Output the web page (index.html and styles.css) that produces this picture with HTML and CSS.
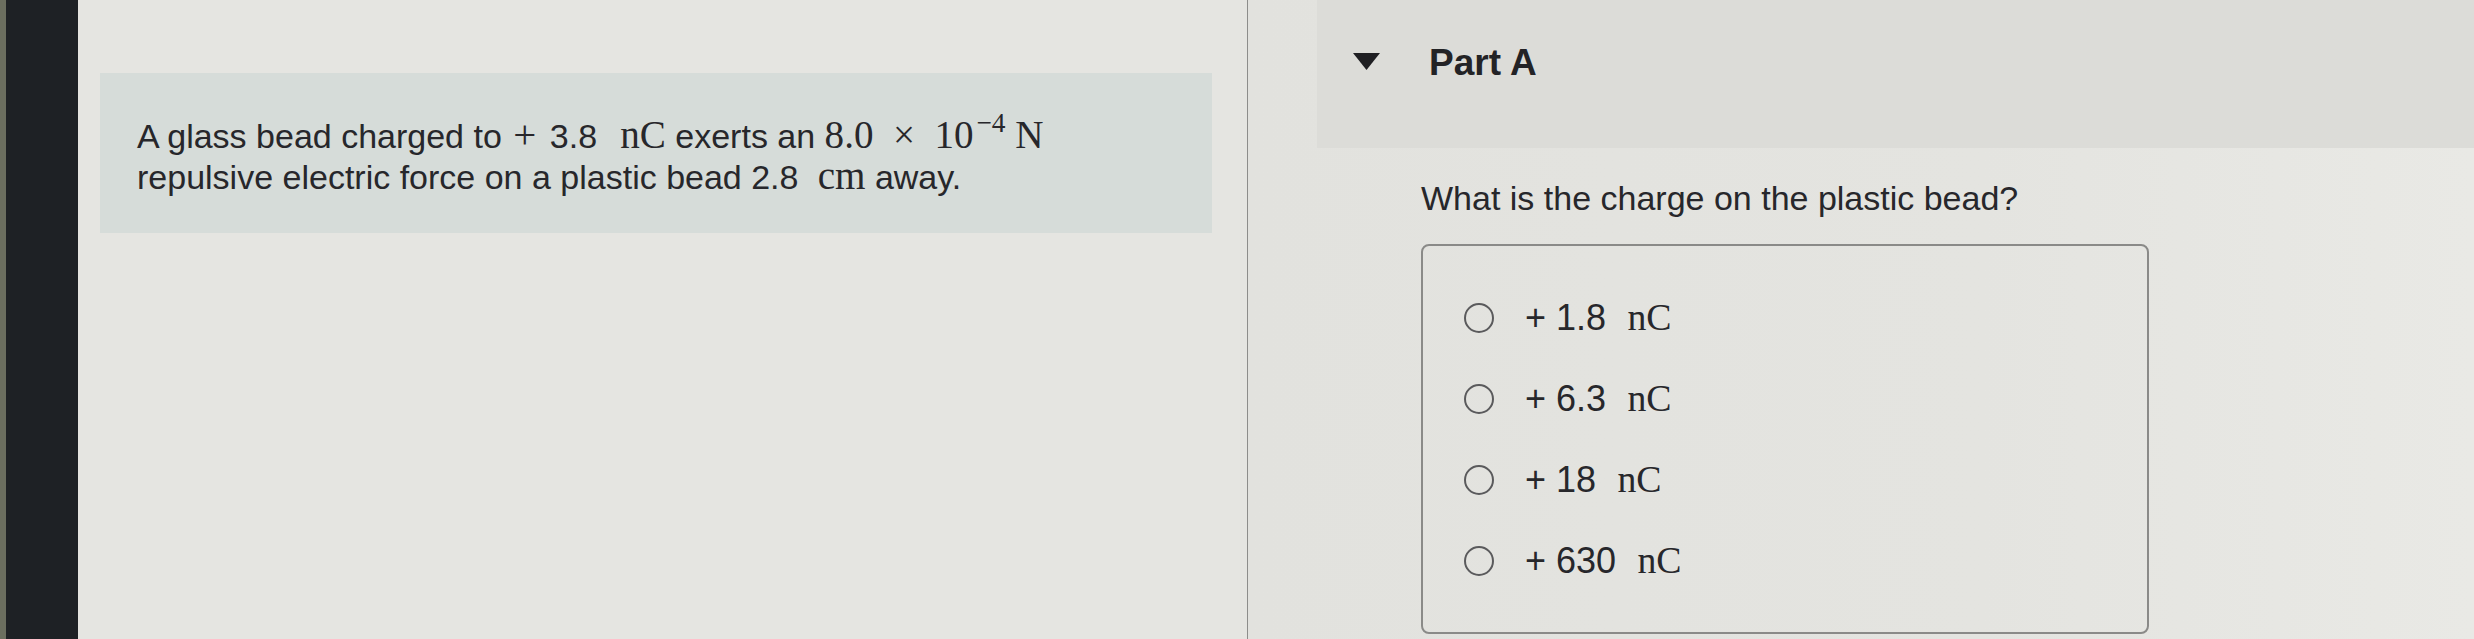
FILE: index.html
```html
<!DOCTYPE html>
<html lang="en">
<head>
<meta charset="utf-8">
<title>Part A</title>
<link rel="stylesheet" href="styles.css">
</head>
<body>
<div class="screen">
  <div class="bezel"></div>
  <main class="left-pane">
    <div class="problem">
      <p class="problem-text">A glass bead charged to <span class="mo">+</span> 3.8 <span class="mi">nC</span> exerts an <span class="mi num">8.0 <span class="times">×</span> 10<sup class="sup">−4</sup> N</span><br>repulsive electric force on a plastic bead 2.8 <span class="mi unit">cm</span> away.</p>
    </div>
  </main>
  <div class="divider"></div>
  <section class="right-pane">
    <header class="part-header">
      <svg class="caret" width="27" height="17" viewBox="0 0 27 17"><polygon points="0,0 27,0 13.5,17" fill="#1f1f22"/></svg>
      <h2 class="part-title">Part A</h2>
    </header>
    <div class="part-body">
      <p class="question">What is the charge on the plastic bead?</p>
      <div class="choices">
        <label class="choice"><span class="radio"></span><span class="choice-text">+ 1.8 <span class="mi">nC</span></span></label>
        <label class="choice"><span class="radio"></span><span class="choice-text">+ 6.3 <span class="mi">nC</span></span></label>
        <label class="choice"><span class="radio"></span><span class="choice-text">+ 18 <span class="mi">nC</span></span></label>
        <label class="choice"><span class="radio"></span><span class="choice-text">+ 630 <span class="mi">nC</span></span></label>
      </div>
    </div>
  </section>
</div>
</body>
</html>
```
FILE: styles.css
```css
html, body {
  margin: 0;
  padding: 0;
}
body {
  width: 2474px;
  height: 639px;
  overflow: hidden;
  background: #e4e4e0;
  font-family: "Liberation Sans", Arial, Helvetica, sans-serif;
  color: #27272b;
}
.screen {
  display: flex;
  height: 639px;
}
.bezel {
  width: 72px;
  flex: none;
  background: #1e2125;
  border-left: 6px solid #6b6e5f;
}
.left-pane {
  width: 1169px;
  flex: none;
  padding: 73px 0 0 22px;
  box-sizing: border-box;
  background: #e5e5e1;
}
.problem {
  width: 1112px;
  height: 160px;
  box-sizing: border-box;
  background: #d6dcd9;
  padding: 43px 0 0 37px;
}
.problem-text {
  margin: 0;
  font-size: 34px;
  line-height: 41px;
  white-space: nowrap;
}
.mo, .mi {
  font-family: "Liberation Serif", "Times New Roman", serif;
  font-size: 1.15em;
  line-height: 0;
}
.mo {
  font-size: 1.2em;
  margin: 0 0.1em 0 0.05em;
}
.mi {
  margin-left: 0.35em;
}
.mi.num {
  margin-left: 0;
}
.mi.unit {
  margin-left: 0.25em;
}
.times {
  margin: 0 0.25em;
}
.sup {
  font-size: 0.7em;
  line-height: 0;
  vertical-align: 0.6em;
  margin-left: 0.1em;
}
.divider {
  width: 1px;
  flex: none;
  background: #8d8d8b;
}
.right-pane {
  flex: 1;
  padding-left: 69px;
  background: linear-gradient(90deg, #e2e2de 0%, #e4e4e0 60%, #e9e9e5 100%);
}
.part-header {
  height: 148px;
  box-sizing: border-box;
  display: flex;
  align-items: flex-start;
  padding: 43px 0 0 36px;
  background: #dcdcd8;
}
.caret {
  margin-top: 10px;
  flex: none;
}
.part-title {
  margin: 0 0 0 49px;
  font-size: 37px;
  line-height: 40px;
  font-weight: bold;
  color: #232326;
}
.part-body {
  padding: 30px 0 0 104px;
}
.question {
  margin: 0;
  font-size: 34px;
  line-height: 40px;
  white-space: nowrap;
}
.choices {
  margin-top: 26px;
  width: 728px;
  height: 390px;
  box-sizing: border-box;
  border: 2px solid #8a8a88;
  border-radius: 8px;
  padding: 31px 0 0 41px;
  display: flex;
  flex-direction: column;
}
.choice {
  height: 81px;
  display: flex;
  align-items: center;
  gap: 31px;
}
.radio {
  width: 30px;
  height: 30px;
  box-sizing: border-box;
  border: 2px solid #5a5a5c;
  border-radius: 50%;
  flex: none;
}
.choice-text {
  font-size: 36px;
  line-height: 40px;
  white-space: nowrap;
}
.choice-text .mi {
  font-size: 1.05em;
  margin-left: 0.3em;
}
```
